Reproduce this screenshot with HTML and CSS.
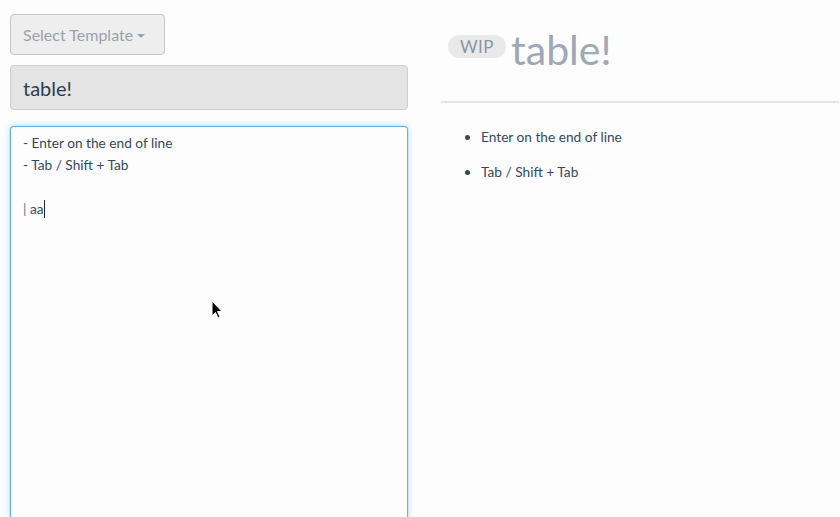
FILE: index.html
```
<!DOCTYPE html>
<html>
<head>
<meta charset="utf-8">
<link rel="stylesheet" href="styles.css">
</head>
<body>
<div class="page">
  <div class="editor">
    <button class="tpl-btn">Select Template<span class="caret"></span></button>
    <div class="title-input">table!</div>
    <div class="textarea">
      <div class="line">- Enter on the end of line</div>
      <div class="line">- Tab / Shift + Tab</div>
      <div class="line">&nbsp;</div>
      <div class="line"><span class="pipe">|</span> aa<span class="text-cursor"></span></div>
    </div>
  </div>
  <div class="preview">
    <h1 class="preview-title"><span class="badge">WIP</span>table!</h1>
    <hr class="rule">
    <ul class="items">
      <li>Enter on the end of line</li>
      <li>Tab / Shift + Tab</li>
    </ul>
  </div>
</div>
<svg class="pointer" width="12" height="20" viewBox="0 0 12 20"><path d="M1 1 L1 16 L4.5 12.5 L7 18 L9 17 L6.5 11.5 L11 11.5 Z" fill="#000" stroke="#fff" stroke-width="1"/></svg>
</body>
</html>
```
FILE: styles.css
```
* { box-sizing: border-box; }
html, body { margin: 0; padding: 0; background: #fdfdfd; }
body { font-family: Lato, "Open Sans", sans-serif; color: #34495e; width: 840px; height: 517px; overflow: hidden; position: relative; }
.page { display: grid; grid-template-columns: 398px 398px; column-gap: 33px; padding: 14px 2px 0 10px; }
.editor { display: flex; flex-direction: column; }
.tpl-btn {
  align-self: flex-start; height: 41px; width: 155px; padding: 0 12px;
  font-family: Lato, sans-serif; font-size: 16px; color: #9aa2ad;
  background: #eeeeee; border: 1px solid #c6c6c6; border-radius: 4px;
  display: flex; align-items: center; text-align: left;
}
.caret { display: inline-block; width: 0; height: 0; margin-left: 4px; margin-top: 2px; border-left: 4px solid transparent; border-right: 4px solid transparent; border-top: 4px solid #9aa2ad; }
.title-input {
  margin-top: 10px; height: 45px; padding: 0 12px; display: flex; align-items: center;
  background: #e4e4e4; border: 1px solid #cfcfcf; border-radius: 4px;
  font-size: 20px; color: #2c3e50;
}
.textarea {
  margin-top: 16px; height: 391px; padding: 5px 12px;
  background: #fdfdfd; border: 1px solid #66b1f0; border-bottom: 0; border-radius: 4px 4px 0 0;
  box-shadow: 0 0 0 1px rgba(102,175,233,0.12), 0 0 6px rgba(102,175,233,0.45);
  font-size: 13.7px; line-height: 22px; color: #34495e;
}
.line { white-space: pre; }
.pipe { color: #6b7785; }
.text-cursor { display: inline-block; width: 1px; height: 18px; background: #222; vertical-align: -4px; }
.preview-title { margin: 14px 0 0; font-weight: 400; font-size: 41px; line-height: 44px; color: #9ea8b7; display: flex; align-items: center; padding-left: 7px; }
.badge { display: inline-block; font-weight: 400; font-size: 17px; line-height: 23px; height: 23px; padding: 0 12px; margin: 0 5px 8px 0; border-radius: 12px; background: #e9e9e9; color: #8b95a3; letter-spacing: 0.5px; }
.rule { margin: 29px 0 0 0; border: 0; height: 2px; background: #e4e4e4; }
.items { margin: 24px 0 0; padding-left: 40px; font-size: 13.7px; line-height: 20px; color: #34495e; }
.items li { margin-bottom: 15px; }
.pointer { position: absolute; left: 211px; top: 300px; }
```
